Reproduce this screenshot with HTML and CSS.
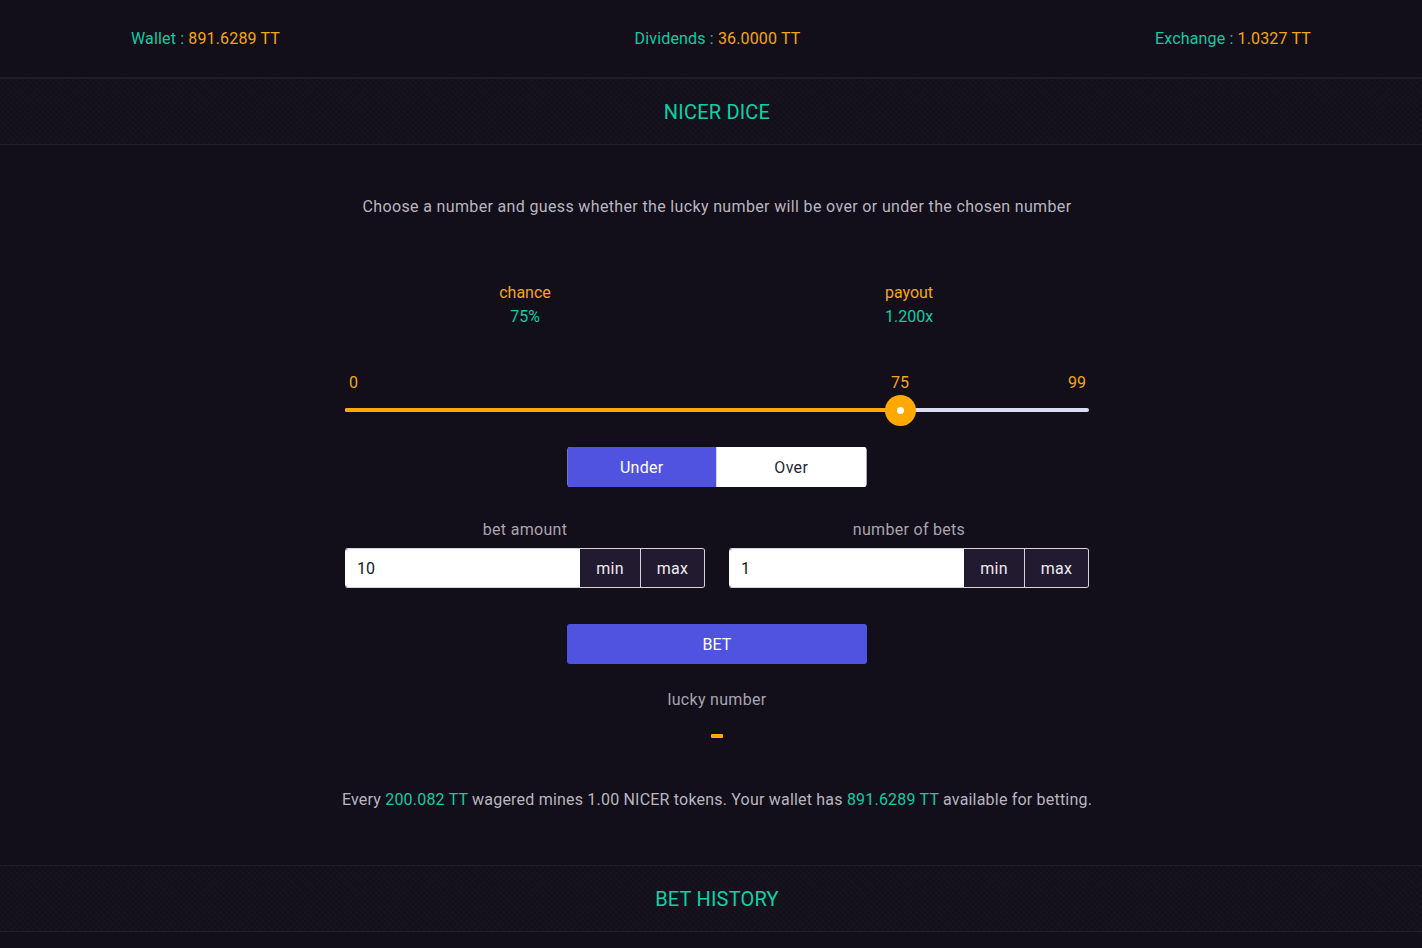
FILE: index.html
```html
<!DOCTYPE html>
<html>
<head>
<meta charset="utf-8">
<title>Nicer Dice</title>
<link rel="stylesheet" href="styles.css">
</head>
<body>
<div class="page">
<header class="topbar">
  <div class="topbar-inner">
    <div class="stat"><span class="k">Wallet :</span> <span class="v">891.6289 TT</span></div>
    <div class="stat"><span class="k">Dividends :</span> <span class="v">36.0000 TT</span></div>
    <div class="stat"><span class="k">Exchange :</span> <span class="v">1.0327 TT</span></div>
  </div>
</header>

<div class="banner"><h2>NICER DICE</h2></div>

<main class="game">
  <p class="desc">Choose a number and guess whether the lucky number will be over or under the chosen number</p>

  <div class="col2 stats">
    <div class="cell"><div class="lbl">chance</div><div class="val">75%</div></div>
    <div class="cell"><div class="lbl">payout</div><div class="val">1.200x</div></div>
  </div>

  <div class="slider">
    <div class="marks">
      <span>0</span>
      <span class="cur">75</span>
      <span>99</span>
    </div>
    <div class="track-wrap">
      <div class="track"><div class="fill"></div></div>
      <div class="thumb"><span class="dot"></span></div>
    </div>
  </div>

  <div class="toggle">
    <button class="tg active">Under</button>
    <button class="tg">Over</button>
  </div>

  <div class="col2 inputs">
    <div class="field">
      <label>bet amount</label>
      <div class="group">
        <div class="inp">10</div>
        <button class="gb min">min</button>
        <button class="gb max">max</button>
      </div>
    </div>
    <div class="field">
      <label>number of bets</label>
      <div class="group">
        <div class="inp">1</div>
        <button class="gb min">min</button>
        <button class="gb max">max</button>
      </div>
    </div>
  </div>

  <button class="bet">BET</button>

  <div class="lucky">lucky number</div>
  <div class="lucky-val"><span class="dash"></span></div>

  <p class="foot">Every <span class="t">200.082 TT</span> wagered mines 1.00 NICER tokens. Your wallet has <span class="t">891.6289 TT</span> available for betting.</p>
</main>

<div class="banner"><h2>BET HISTORY</h2></div>
</div>
</body>
</html>
```

FILE: styles.css
```css
* { box-sizing: border-box; }
html, body { margin: 0; padding: 0; }
body {
  background: #120e1a;
  font-family: Roboto, "Noto Sans", sans-serif;
  font-size: 16px;
  color: #b7b4bd;
  height: 948px;
  overflow: hidden;
}
.page { width: 1434px; }
.topbar {
  height: 79px;
  border-bottom: 2px solid #211b2a;
  padding: 0 123px 0 131px;
}
.topbar-inner {
  height: 77px;
  display: flex;
  justify-content: space-between;
  align-items: center;
}
.stat { font-size: 16px; white-space: pre; letter-spacing: 0.15px; }
.stat .k { color: #10cba1; }
.stat .v { color: #f5a70f; }

.banner {
  height: 66px;
  border-bottom: 1px solid #221c2b;
  background-color: #14101c;
  background-image:
    repeating-linear-gradient(45deg, rgba(255,255,255,0.012) 0 2px, transparent 2px 4px),
    repeating-linear-gradient(-45deg, rgba(0,0,0,0.08) 0 2px, transparent 2px 4px);
  display: flex;
  align-items: center;
  justify-content: center;
}
.banner h2 {
  margin: 0;
  font-weight: 400;
  font-size: 20px;
  letter-spacing: 0.2px;
  color: #0bd2a6;
}

.game {
  padding: 50px 0 53px;
  display: flex;
  flex-direction: column;
  align-items: center;
  border-bottom: 1px solid #221c2b;
}
.game > * { width: 744px; }
.desc {
  margin: 0;
  line-height: 24px;
  text-align: center;
  color: #b9b6bf;
  white-space: nowrap;
  letter-spacing: 0.35px;
}
.col2 {
  display: grid;
  grid-template-columns: 1fr 1fr;
  column-gap: 24px;
}
.stats { margin-top: 62px; text-align: center; line-height: 24px; }
.stats .lbl { color: #f5a70f; }
.stats .val { color: #10cba1; }

.slider { margin-top: 42px; }
.marks {
  position: relative;
  display: flex;
  justify-content: space-between;
  padding: 0 3px 0 4px;
  line-height: 24px;
  color: #f5a70f;
}
.marks .cur {
  position: absolute;
  left: 555px;
  transform: translateX(-50%);
}
.track-wrap {
  position: relative;
  height: 31px;
}
.track {
  position: absolute;
  left: 0; right: 0; top: 13px;
  height: 4px;
  border-radius: 2px;
  background: #dcdcf2;
  overflow: hidden;
}
.fill { width: 555px; height: 100%; background: #ffa900; }
.thumb {
  position: absolute;
  left: 540px;
  top: 0;
  width: 31px;
  height: 31px;
  border-radius: 50%;
  background: #ffa900;
  display: flex;
  align-items: center;
  justify-content: center;
}
.thumb .dot { width: 7px; height: 7px; border-radius: 50%; background: #fff; }

.game > .toggle {
  margin-top: 21px;
  width: 299px;
  height: 40px;
  display: flex;
  border-radius: 3px;
  overflow: hidden;
  background: #fff;
  transform: translateX(-0.5px);
}
.tg {
  flex: 1;
  border: 0;
  margin: 0;
  font: inherit;
  font-size: 16px;
  letter-spacing: 0.3px;
  background: #fff;
  color: #2a2633;
}
.tg.active { background: #5053e0; color: #fff; }

.inputs { margin-top: 31px; }
.field { display: flex; flex-direction: column; }
.field label {
  text-align: center;
  line-height: 24px;
  color: #a8a4ae;
  margin-bottom: 6px;
  letter-spacing: 0.3px;
}
.group {
  display: flex;
  height: 40px;
  border-radius: 3px;
  overflow: hidden;
  border: 1px solid #d6d3dc;
  border-left: 0;
  background: #221a2e;
}
.inp {
  flex: 1;
  background: #fff;
  color: #1a1720;
  padding-left: 12px;
  display: flex;
  align-items: center;
  border-radius: 3px 0 0 3px;
}
.gb {
  border: 0;
  margin: 0;
  font: inherit;
  font-size: 16px;
  letter-spacing: 0.3px;
  background: #221a2e;
  color: #eeeaf3;
}
.gb.min { width: 60px; }
.gb.max { width: 64px; border-left: 1px solid #d6d3dc; }

.game > .bet {
  margin-top: 36px;
  width: 300px;
  height: 40px;
  border: 0;
  border-radius: 3px;
  background: #5053e0;
  color: #fff;
  font: inherit;
  font-size: 16px;
}
.lucky {
  margin-top: 24px;
  text-align: center;
  line-height: 24px;
  color: #a8a4ae;
  letter-spacing: 0.3px;
}
.lucky-val {
  display: flex;
  justify-content: center;
  margin-top: 22px;
  height: 4px;
}
.dash { width: 12px; height: 4px; border-radius: 1px; background: #ffa900; }
.game > .foot {
  width: auto;
  margin: 50px 0 0;
  line-height: 24px;
  text-align: center;
  white-space: nowrap;
  color: #b9b6bf;
  letter-spacing: 0.2px;
}
.foot .t { color: #10cba1; }
```
